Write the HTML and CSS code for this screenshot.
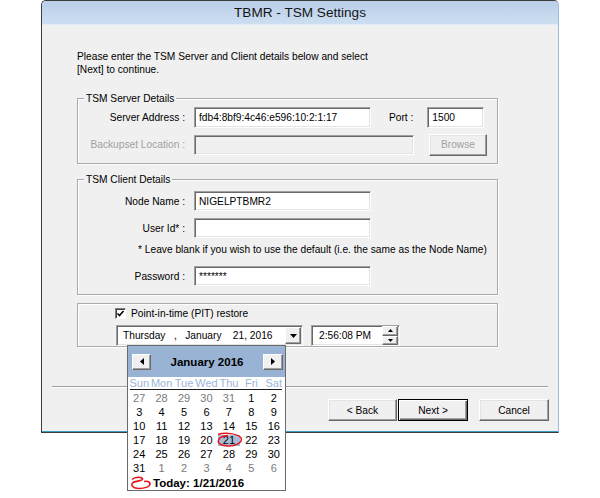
FILE: index.html
```html
<!DOCTYPE html>
<html lang="en">

<head>
    <meta charset="UTF-8">
    <meta name="viewport" content="width=device-width, initial-scale=1.0">
    <title>TBMR - TSM Settings</title>

    <link rel="stylesheet" href="styles.css">
</head>

<body>
    <div class="window">
        <div class="titlebar">TBMR - TSM Settings</div>
        <div class="client">
            <p class="intro">Please enter the TSM Server and Client details below and select<br>[Next] to continue.</p>

            <!-- server -->
            <fieldset class="group" id="server">
                <legend>TSM Server Details</legend>
                <div class="row">
                    <label class="label">Server Address :</label>
                    <input class="edit" id="address" type="text" value="fdb4:8bf9:4c46:e596:10:2:1:17">
                    <label class="port-label">Port :</label>
                    <input class="edit" id="port" type="text" value="1500">
                </div>
                <div class="row row-second">
                    <label class="label off">Backupset Location :</label>
                    <input class="edit off" id="backupset" type="text" disabled>
                    <button class="btn" id="browse" disabled>Browse</button>
                </div>
            </fieldset>

            <!-- client -->
            <fieldset class="group" id="client">
                <legend>TSM Client Details</legend>
                <div class="row">
                    <label class="label">Node Name :</label>
                    <input class="edit short" type="text" value="NIGELPTBMR2">
                </div>
                <div class="row row-user">
                    <label class="label">User Id* :</label>
                    <input class="edit short" type="text" value="">
                </div>
                <div class="note">* Leave blank if you wish to use the default (i.e. the same as the Node Name)</div>
                <div class="row row-pass">
                    <label class="label">Password :</label>
                    <input class="edit short" type="text" value="*******">
                </div>
            </fieldset>

            <!-- point in time -->
            <fieldset class="group" id="pit">
                <div class="check-row">
                    <span class="checkbox">
                        <svg width="9" height="9" viewBox="0 0 9 9"><polyline points="1.5,4.5 3.5,6.5 7.5,2" fill="none" stroke="#000" stroke-width="1.6"/></svg>
                    </span>
                    <label>Point-in-time (PIT) restore</label>
                </div>
                <div class="date-row">
                    <div class="datebox">
                        <span class="date-text">Thursday   ,   January    21, 2016</span>
                        <span class="drop">
                            <svg width="7" height="4" viewBox="0 0 7 4"><polygon points="0,0 7,0 3.5,4" fill="#000"/></svg>
                        </span>
                    </div>
                    <div class="timebox">
                        <span class="time-text">2:56:08 PM</span>
                        <span class="spin">
                            <span class="spin-btn"><svg width="5" height="3" viewBox="0 0 5 3"><polygon points="0,3 5,3 2.5,0" fill="#000"/></svg></span>
                            <span class="spin-btn"><svg width="5" height="3" viewBox="0 0 5 3"><polygon points="0,0 5,0 2.5,3" fill="#000"/></svg></span>
                        </span>
                    </div>
                </div>
            </fieldset>

            <div class="separator"></div>

            <div class="buttons">
                <button class="btn" id="back">&lt; Back</button>
                <button class="btn default" id="next">Next &gt;</button>
                <button class="btn" id="cancel">Cancel</button>
            </div>

            <!-- dropdown of the date picker, hangs over the dialog -->
            <div class="calendar">
                <div class="cal-head">
                    <span class="cal-btn">
                        <svg width="4" height="7" viewBox="0 0 4 7"><polygon points="4,0 4,7 0,3.5" fill="#000"/></svg>
                    </span>
                    <span class="cal-title">January 2016</span>
                    <span class="cal-btn cal-btn-right">
                        <svg width="4" height="7" viewBox="0 0 4 7"><polygon points="0,0 0,7 4,3.5" fill="#000"/></svg>
                    </span>
                </div>
                <div class="cal-days">
                    <span>Sun</span><span>Mon</span><span>Tue</span><span>Wed</span><span>Thu</span><span>Fri</span><span>Sat</span>
                </div>
                <div class="cal-line"></div>
                <div class="cal-grid">
                    <span class="other">27</span><span class="other">28</span><span class="other">29</span><span class="other">30</span><span class="other">31</span><span>1</span><span>2</span>
                    <span>3</span><span>4</span><span>5</span><span>6</span><span>7</span><span>8</span><span>9</span>
                    <span>10</span><span>11</span><span>12</span><span>13</span><span>14</span><span>15</span><span>16</span>
                    <span>17</span><span>18</span><span>19</span><span>20</span>
                    <span class="sel">21
                        <svg class="scribble" width="28" height="17" viewBox="0 0 28 17"><path d="M2 2.5 C 8 0.5, 22 1, 25 6 C 27.5 10.5, 19 14.5, 11 14 C 4 13.5, 1.5 11, 2.5 8 C 3.5 5, 8 3.8, 12 3.5" fill="none" stroke="#e8141b" stroke-width="1.5"/></svg>
                    </span>
                    <span>22</span><span>23</span>
                    <span>24</span><span>25</span><span>26</span><span>27</span><span>28</span><span>29</span><span>30</span>
                    <span>31</span><span class="other">1</span><span class="other">2</span><span class="other">3</span><span class="other">4</span><span class="other">5</span><span class="other">6</span>
                </div>
                <div class="cal-today">
                    <svg width="22" height="14" viewBox="0 0 22 14"><path d="M2 3.5 C 5 0.5, 12 0.8, 12.5 3 C 13 5, 5 5, 3 6.5 C 0 9, 3 12.5, 9 12.5 C 15 12.5, 20.5 10.5, 20 7.5 C 19.5 5.5, 16 5.2, 14 5.5" fill="none" stroke="#e8141b" stroke-width="1.6"/></svg>
                    <span>Today: 1/21/2016</span>
                </div>
            </div>
        </div>
    </div>
</body>

</html>
```

FILE: styles.css
```css
body, html {
    margin: 0;
    padding: 0;
    height: 100%;
    background-color: #fff;
    font-family: "Liberation Sans", Arial, sans-serif;
    font-size: 10.2px;
    color: #000;
}

.window {
    margin-left: 41px;
    width: 518px;
    height: 433px;
    box-sizing: border-box;
    border: 1px solid #3c3c3c;
    border-right-color: #9dbcdc;
    border-radius: 5px 5px 0 0;
    background-color: #f0f0f0;
    box-shadow: inset 0 -1px #3f9cc4;
    display: flex;
    flex-direction: column;
}

.titlebar {
    height: 23px;
    line-height: 23px;
    text-align: center;
    font-size: 13.6px;
    color: #151515;
    background: linear-gradient(#b9cfe9, #cddef1);
    border-bottom: 1px solid #e2ecf7;
    border-radius: 4px 4px 0 0;
}

.client {
    position: relative;
    padding-left: 35px;
}

.intro {
    margin: 25px 0 16px;
    line-height: 13px;
}

/* group boxes */
.group {
    margin: 0;
    padding: 0;
    width: 421px;
    min-inline-size: 0;
    box-sizing: border-box;
    border: 1px solid #aaa;
    box-shadow: inset 1px 1px #fff, 1px 1px #fff;
}

.group legend {
    margin-left: 6px;
    padding: 0 2px;
    line-height: 13px;
    background-color: #f0f0f0;
}

#server {
    padding: 2px 0 8px;
}

#client {
    margin-top: 9px;
    padding: 5px 0 8px;
}

#pit {
    margin-top: 8px;
    padding: 3px 0 0;
}

.row {
    display: flex;
    align-items: center;
    height: 21px;
}

.row-second {
    margin-top: 6px;
}

#client .row {
    height: 20px;
}

.row-user {
    margin-top: 7px;
}

.row-pass {
    margin-top: 10px;
}

.label {
    width: 107px;
    margin-right: 9px;
    text-align: right;
}

.off {
    color: #a0a0a0;
}

.port-label {
    margin-left: 18px;
    margin-right: 14px;
}

.note {
    margin-top: 5px;
    padding-left: 60px;
    line-height: 13px;
}

/* sunken edit boxes */
.edit {
    height: 100%;
    box-sizing: border-box;
    margin: 0;
    padding: 0 4px;
    border: 1px solid;
    border-color: #a0a0a0 #fff #fff #a0a0a0;
    box-shadow: inset 1px 1px #696969, inset -1px -1px #e3e3e3;
    background-color: #fff;
    font: inherit;
    color: #000;
    outline: none;
}

#address {
    width: 177px;
}

#port {
    width: 57px;
}

#backupset {
    width: 220px;
    height: 20px;
    background-color: #f0f0f0;
}

.short {
    width: 177px;
}

/* buttons */
.btn {
    height: 22px;
    box-sizing: border-box;
    margin: 0;
    padding: 0;
    border: 1px solid;
    border-color: #fff #696969 #696969 #fff;
    box-shadow: inset -1px -1px #a0a0a0, inset 1px 1px #e3e3e3;
    background-color: #f0f0f0;
    font: inherit;
    color: #000;
}

#browse {
    width: 58px;
    margin-left: 15px;
    color: #a0a0a0;
}

.btn.default {
    border: 1px solid #000;
    box-shadow: inset 1px 1px #fff, inset -1px -1px #696969, inset -2px -2px #a0a0a0;
}

/* point in time */
.check-row {
    display: flex;
    align-items: center;
    height: 12px;
    padding-left: 37px;
}

.checkbox {
    width: 11px;
    height: 11px;
    box-sizing: border-box;
    margin-right: 5px;
    border: 1px solid;
    border-color: #808080 #fff #fff #808080;
    box-shadow: inset 1px 1px #404040;
    background-color: #fff;
    display: flex;
    align-items: center;
    justify-content: center;
}

.date-row {
    display: flex;
    margin-top: 6px;
    padding-left: 38px;
    height: 21px;
}

.datebox, .timebox {
    display: flex;
    align-items: center;
    box-sizing: border-box;
    height: 21px;
    border: 1px solid;
    border-color: #a0a0a0 #fff #fff #a0a0a0;
    box-shadow: inset 1px 1px #696969, inset -1px -1px #e3e3e3;
    background-color: #fff;
}

.datebox {
    width: 187px;
}

.date-text {
    flex: 1;
    padding-left: 6px;
    white-space: pre;
}

.drop, .spin-btn, .cal-btn {
    display: flex;
    align-items: center;
    justify-content: center;
    box-sizing: border-box;
    border: 1px solid;
    border-color: #fff #696969 #696969 #fff;
    box-shadow: inset -1px -1px #a0a0a0;
    background-color: #f0f0f0;
}

.drop {
    width: 16px;
    height: 17px;
    margin-right: 1px;
}

.timebox {
    width: 89px;
    margin-left: 8px;
}

.time-text {
    flex: 1;
    padding-left: 7px;
}

.spin {
    display: flex;
    flex-direction: column;
    width: 16px;
    height: 19px;
    margin-right: 1px;
}

.spin-btn {
    flex: 1;
}

/* month calendar dropdown */
.calendar {
    position: absolute;
    left: 85px;
    top: 320px;
    z-index: 2;
    width: 159px;
    box-sizing: border-box;
    border: 1px solid #6a6a6a;
    background-color: #fff;
    font-size: 11px;
}

.cal-head {
    display: flex;
    align-items: center;
    justify-content: space-between;
    height: 31px;
    padding: 0 2px 0 4px;
    background-color: #98b3d3;
}

.cal-btn {
    width: 19px;
    height: 16px;
}

.cal-btn-right {
    width: 20px;
}

.cal-title {
    font-size: 11.5px;
    font-weight: bold;
}

.cal-days, .cal-grid {
    display: grid;
    grid-template-columns: repeat(7, 1fr);
    text-align: center;
}

.cal-days {
    height: 12px;
    line-height: 12px;
    color: #9bb5d6;
}

.cal-line {
    margin: 0 3px 0 2px;
    border-top: 1px solid #1a1a1a;
}

.cal-grid {
    margin-top: 1px;
    grid-auto-rows: 14px;
    line-height: 14px;
}

.cal-grid .other {
    color: #7a7a7a;
}

.cal-grid .sel {
    position: relative;
    box-sizing: border-box;
    padding: 2px 0 1px;
    line-height: 11px;
    background-color: #a8bcd8;
    background-clip: content-box;
}

.scribble {
    position: absolute;
    left: -2px;
    top: -1px;
}

.cal-today {
    display: flex;
    align-items: center;
    gap: 1px;
    height: 14px;
    margin-top: 1px;
    padding-left: 2px;
    font-size: 11.5px;
    font-weight: bold;
}

/* bottom */
.separator {
    margin: 39px 0 0 -25px;
    width: 496px;
    border-top: 1px solid #a0a0a0;
    border-bottom: 1px solid #fff;
}

.buttons {
    display: flex;
    justify-content: flex-end;
    margin-top: 11px;
    padding-right: 9px;
}

#back {
    width: 69px;
}

#next {
    width: 70px;
    margin-left: 1px;
}

#cancel {
    width: 70px;
    margin-left: 11px;
}
```
